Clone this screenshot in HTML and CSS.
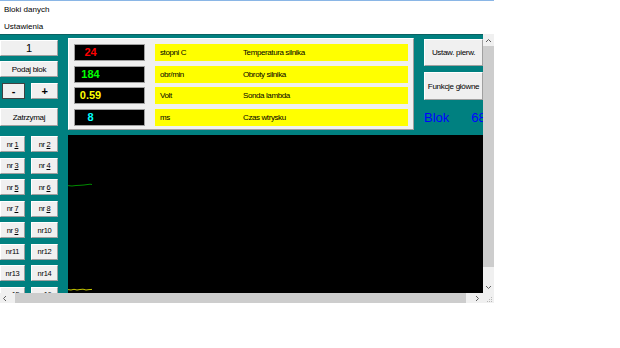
FILE: index.html
```html
<!DOCTYPE html>
<html lang="pl">
<head>
  <meta charset="UTF-8" />
  <title>Bloki danych</title>
  <link rel="stylesheet" href="styles.css">
</head>
<body>

  <div class="window">
    <div class="titlebar">Bloki danych</div>
    <div class="menubar"><span>Ustawienia</span></div>

    <div class="client">
      <div class="content">

        <!-- lewa kolumna -->
        <div class="left">
          <div class="counter">1</div>
          <button class="btn">Podaj blok</button>
          <div class="pm">
            <button class="btn minus">-</button>
            <button class="btn plus">+</button>
          </div>
          <button class="btn stop">Zatrzymaj</button>
          <div class="nr-grid">
            <button class="btn nr">nr <u>1</u></button>
            <button class="btn nr">nr <u>2</u></button>
            <button class="btn nr">nr <u>3</u></button>
            <button class="btn nr">nr <u>4</u></button>
            <button class="btn nr">nr <u>5</u></button>
            <button class="btn nr">nr <u>6</u></button>
            <button class="btn nr">nr <u>7</u></button>
            <button class="btn nr">nr <u>8</u></button>
            <button class="btn nr">nr <u>9</u></button>
            <button class="btn nr">nr10</button>
            <button class="btn nr">nr11</button>
            <button class="btn nr">nr12</button>
            <button class="btn nr">nr13</button>
            <button class="btn nr">nr14</button>
            <button class="btn nr">nr15</button>
            <button class="btn nr">nr16</button>
          </div>
        </div>

        <!-- dane + wykres -->
        <div class="main">
          <div class="top">
            <div class="panel">
              <div class="row">
                <div class="val red"><span>24</span></div>
                <div class="label"><span class="unit">stopni C</span><span>Temperatura silnika</span></div>
              </div>
              <div class="row">
                <div class="val green"><span>184</span></div>
                <div class="label"><span class="unit">obr/min</span><span>Obroty silnika</span></div>
              </div>
              <div class="row">
                <div class="val yellow"><span>0.59</span></div>
                <div class="label"><span class="unit">Volt</span><span>Sonda lambda</span></div>
              </div>
              <div class="row">
                <div class="val cyan"><span>8</span></div>
                <div class="label"><span class="unit">ms</span><span>Czas wtrysku</span></div>
              </div>
            </div>
            <div class="side">
              <button class="btn big first">Ustaw. pierw.</button>
              <button class="btn big">Funkcje główne</button>
              <div class="blok"><span>Blok</span><span>68</span></div>
            </div>
          </div>
          <div class="graph">
            <svg width="415" height="158" viewBox="0 0 415 158">
              <polyline points="0,50.6 4,51 8,50.5 12,50.3 16,50 19,49.6 22,49.2 24,49.5" fill="none" stroke="#008c00" stroke-width="1"/>
              <polyline points="0,154.6 3,155 6,154.3 9,155 12,154.5 15,154.2 18,155 21,154.6 24,154.4" fill="none" stroke="#c8c800" stroke-width="1"/>
            </svg>
          </div>
        </div>
      </div>

      <!-- paski przewijania -->
      <div class="vscroll">
        <div class="arrow">
          <svg width="7" height="5" viewBox="0 0 7 5"><polyline points="1,4 3.5,1.5 6,4" fill="none" stroke="#606060"/></svg>
        </div>
        <div class="vthumb"></div>
        <div class="track"></div>
        <div class="arrow">
          <svg width="7" height="5" viewBox="0 0 7 5"><polyline points="1,1 3.5,3.5 6,1" fill="none" stroke="#606060"/></svg>
        </div>
      </div>
      <div class="hscroll">
        <div class="harrow left-arrow">
          <svg width="5" height="7" viewBox="0 0 5 7"><polyline points="4,1 1.5,3.5 4,6" fill="none" stroke="#606060"/></svg>
        </div>
        <div class="hthumb"></div>
        <div class="track"></div>
        <div class="harrow right-arrow">
          <svg width="5" height="7" viewBox="0 0 5 7"><polyline points="1,1 3.5,3.5 1,6" fill="none" stroke="#606060"/></svg>
        </div>
      </div>
      <div class="corner">
        <svg width="11" height="10" viewBox="0 0 11 10">
          <rect x="8" y="4" width="1" height="1" fill="#b8b8b8"/>
          <rect x="6" y="6" width="1" height="1" fill="#b8b8b8"/>
          <rect x="8" y="6" width="1" height="1" fill="#b8b8b8"/>
          <rect x="4" y="8" width="1" height="1" fill="#b8b8b8"/>
          <rect x="6" y="8" width="1" height="1" fill="#b8b8b8"/>
          <rect x="8" y="8" width="1" height="1" fill="#b8b8b8"/>
        </svg>
      </div>
    </div>
  </div>

</body>
</html>
```

FILE: styles.css
```css
body {
  margin: 0;
  background: #fff;
  font-family: 'Liberation Sans', Arial, sans-serif;
  color: #000;
}

.window {
  width: 494px;
  height: 303px;
  border-top: 1px solid #8ab6e6;
  display: flex;
  flex-direction: column;
}

.titlebar {
  height: 18px;
  line-height: 18px;
  padding-left: 4px;
  font-size: 8px;
}

.menubar {
  height: 15px;
  line-height: 15px;
  padding-left: 4px;
  font-size: 8px;
}

.client {
  display: grid;
  grid-template-columns: 483px 11px;
  grid-template-rows: 259px 10px;
}

.content {
  display: flex;
  overflow: hidden;
  background: #008080;
  box-shadow: inset 0 1px #0b6262;
}

/* przyciski */
.btn {
  box-sizing: border-box;
  margin: 0;
  padding: 0;
  height: 16px;
  background: #f0f0f0;
  border: 1px solid;
  border-color: #fff #a0a0a0 #a0a0a0 #fff;
  font-family: 'Liberation Sans', Arial, sans-serif;
  font-size: 8px;
  letter-spacing: -0.3px;
  color: #000;
  white-space: nowrap;
}

.left {
  width: 58px;
  flex: none;
  padding-top: 6px;
  display: flex;
  flex-direction: column;
}

.left > * { flex-shrink: 0; }

.counter {
  box-sizing: border-box;
  height: 16px;
  line-height: 14px;
  margin-bottom: 5px;
  background: #f0f0f0;
  border: 1px solid;
  border-color: #fff #a0a0a0 #a0a0a0 #fff;
  text-align: center;
  font-size: 11px;
}

.left > .btn { margin-bottom: 6px; }

.pm {
  display: flex;
  gap: 6px;
  padding-left: 2px;
  margin-bottom: 9px;
}

.minus {
  width: 23px;
  border: 1px solid #404040;
  font-size: 11px;
  font-weight: bold;
}

.plus {
  width: 27px;
  font-size: 11px;
  font-weight: bold;
}

.left > .stop {
  height: 18px;
  margin-bottom: 10px;
}

.nr-grid {
  display: grid;
  grid-template-columns: 25px 27px;
  grid-auto-rows: 16px;
  column-gap: 6px;
  row-gap: 5.5px;
}

.nr {
  font-size: 7.5px;
}

/* panel z danymi */
.main {
  width: 415px;
  margin-left: 10px;
  flex: none;
  display: flex;
  flex-direction: column;
}

.top {
  display: flex;
  padding-top: 4px;
}

.panel {
  box-sizing: border-box;
  width: 346px;
  height: 92px;
  padding: 5px 5px 0 5px;
  background: #f0f0f0;
  border: 1px solid;
  border-color: #fff #a0a0a0 #a0a0a0 #fff;
  display: flex;
  flex-direction: column;
  gap: 4.6px;
}

.row {
  display: flex;
  height: 17px;
  gap: 10px;
}

.val {
  box-sizing: border-box;
  width: 71px;
  flex: none;
  background: #000;
  border: 1px solid #a0a0a0;
  font-size: 11px;
  font-weight: bold;
  line-height: 15px;
}

.val span {
  display: inline-block;
  width: 31px;
  text-align: center;
}

.red { color: #ff0000; }
.green { color: #00ff00; }
.yellow { color: #ffff00; }
.cyan { color: #00ffff; }

.label {
  flex: 1;
  background: #ffff00;
  display: flex;
  align-items: center;
  padding-left: 5px;
  font-size: 8px;
  letter-spacing: -0.4px;
}

.unit {
  width: 83px;
  flex: none;
}

.side {
  width: 59px;
  margin-left: 10px;
  padding-top: 1px;
  display: flex;
  flex-direction: column;
  gap: 6px;
}

.big {
  width: 59px;
  height: 28px;
}

.big.first { height: 27px; }

.blok {
  margin-top: 3px;
  display: flex;
  gap: 22px;
  font-size: 13px;
  line-height: 17px;
  color: #0000ff;
  white-space: nowrap;
}

.graph {
  margin-top: 5px;
  flex: 1;
  background: #000;
}

.graph svg { display: block; }

/* paski przewijania */
.vscroll {
  display: flex;
  flex-direction: column;
  background: #f0f0f0;
}

.arrow {
  height: 12px;
  display: flex;
  align-items: center;
  justify-content: center;
}

.arrow svg, .harrow svg { display: block; }

.vthumb {
  height: 221px;
  background: #cdcdcd;
}

.track { flex: 1; }

.hscroll {
  display: flex;
  background: #f0f0f0;
}

.harrow {
  display: flex;
  align-items: center;
}

.left-arrow {
  width: 15px;
  padding-left: 2px;
  box-sizing: border-box;
}

.right-arrow {
  width: 11px;
  justify-content: center;
}

.hthumb {
  width: 451px;
  background: #cdcdcd;
}

.corner {
  background: #f0f0f0;
}

.corner svg { display: block; }
```
